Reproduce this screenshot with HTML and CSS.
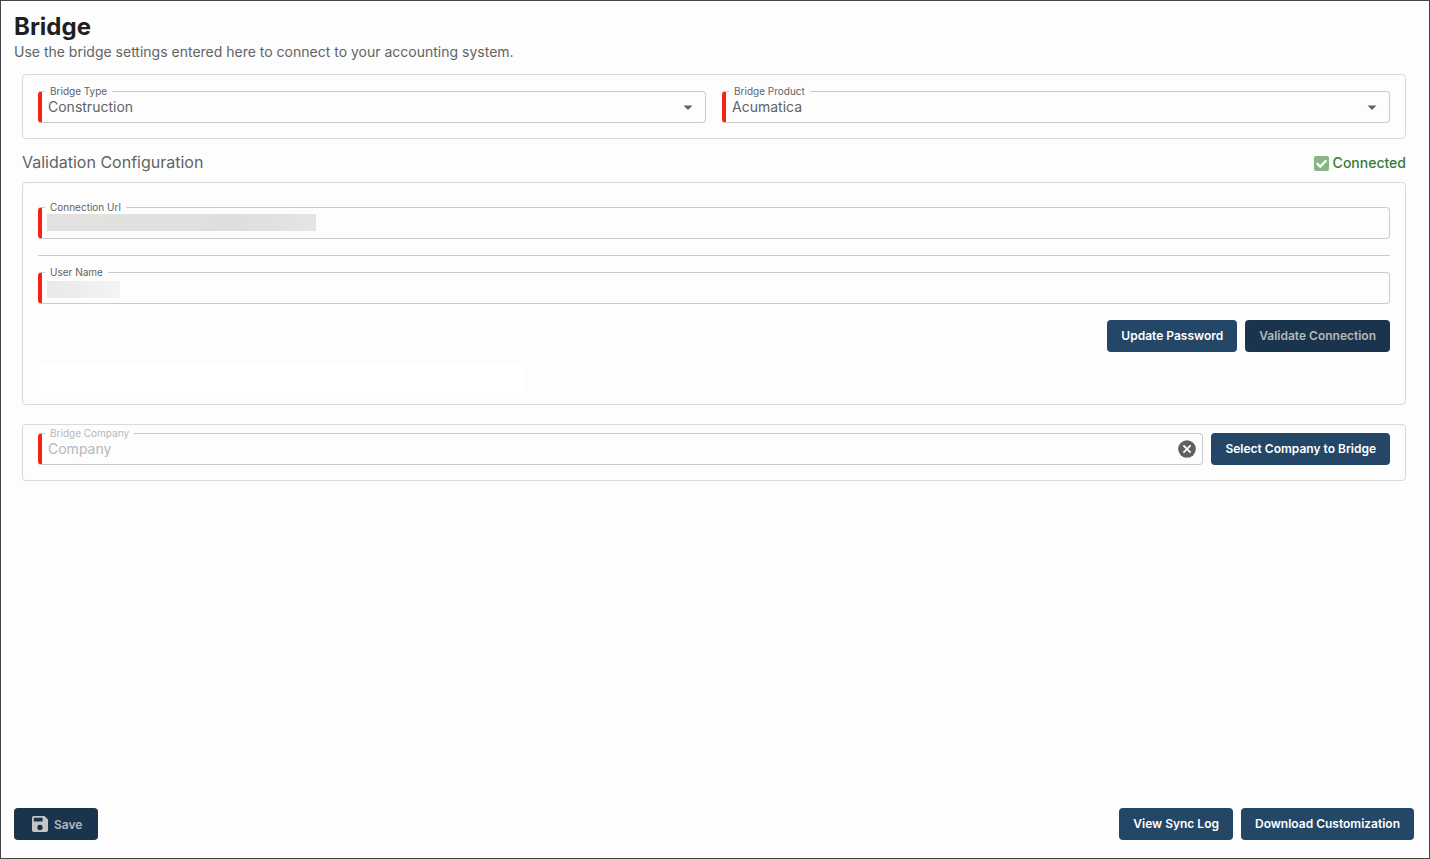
FILE: index.html
```html
<!doctype html>
<html lang="en">
<head>
<meta charset="utf-8">
<title>Bridge</title>
<link rel="stylesheet" href="styles.css">
</head>
<body>
	<header>
		<h1>Bridge</h1>
		<p class="intro">Use the bridge settings entered here to connect to your accounting system.</p>
	</header>

	<main>
		<section class="panel types">
			<fieldset class="field">
				<legend><label for="bridgeType">Bridge Type</label></legend>
				<div class="control">
					<select id="bridgeType">
						<option>Construction</option>
					</select>
					<svg class="arrow" width="10" height="5" viewBox="0 0 10 5"><path d="M0.5 0.5h9L5 5z"/></svg>
				</div>
			</fieldset>
			<fieldset class="field">
				<legend><label for="bridgeProduct">Bridge Product</label></legend>
				<div class="control">
					<select id="bridgeProduct">
						<option>Acumatica</option>
					</select>
					<svg class="arrow" width="10" height="5" viewBox="0 0 10 5"><path d="M0.5 0.5h9L5 5z"/></svg>
				</div>
			</fieldset>
		</section>

		<div class="sectionHead">
			<h2>Validation Configuration</h2>
			<span class="status">
				<svg width="15" height="15" viewBox="0 0 15 15"><rect width="15" height="15" rx="2" fill="#88b582"/><path d="M3.4 7.8l2.9 2.8 5.4-5.6" fill="none" stroke="#fff" stroke-width="2.4" stroke-linecap="round"/></svg>
				Connected
			</span>
		</div>

		<section class="panel connection">
			<fieldset class="field">
				<legend><label for="connectionUrl">Connection Url</label></legend>
				<div class="control">
					<input type="text" id="connectionUrl" class="maskedUrl">
				</div>
			</fieldset>
			<hr>
			<fieldset class="field">
				<legend><label for="userName">User Name</label></legend>
				<div class="control">
					<input type="text" id="userName" class="maskedUser">
				</div>
			</fieldset>
			<div class="buttons">
				<button type="button">Update Password</button>
				<button type="button" disabled>Validate Connection</button>
			</div>
			<div class="message"></div>
		</section>

		<section class="panel company">
			<fieldset class="field dim">
				<legend><label for="company">Bridge Company</label></legend>
				<div class="control">
					<input type="text" id="company" placeholder="Company">
					<button type="button" class="clear" aria-label="Clear">
						<svg width="18" height="18" viewBox="0 0 18 18"><circle cx="9" cy="9" r="8.8" fill="#5f6061"/><path d="M5.4 5.4l7.2 7.2M12.6 5.4l-7.2 7.2" stroke="#fff" stroke-width="1.8"/></svg>
					</button>
				</div>
			</fieldset>
			<button type="button">Select Company to Bridge</button>
		</section>
	</main>

	<footer>
		<button type="button" class="save" disabled>
			<svg width="16" height="16" viewBox="0 0 16 16"><path fill-rule="evenodd" d="M1.8 0H12.4L16 3.6V14.2A1.8 1.8 0 0 1 14.2 16H1.8A1.8 1.8 0 0 1 0 14.2V1.8A1.8 1.8 0 0 1 1.8 0zM1.8 1.8V5.4H10.6V1.8zM8 8.8a2.7 2.7 0 1 0 0 5.4a2.7 2.7 0 1 0 0-5.4z"/></svg>
			Save
		</button>
		<div class="buttons">
			<button type="button">View Sync Log</button>
			<button type="button">Download Customization</button>
		</div>
	</footer>
</body>
</html>
```
FILE: styles.css
```css
* {
  box-sizing: border-box;
}
body {
  margin: 0;
  min-height: 100vh;
  display: flex;
  flex-direction: column;
  padding: 12px 15px 18px 13px;
  border: 1px solid #444446;
  background-color: #fdfdfd;
  color: #616365;
  font-family: Inter, "Liberation Sans", sans-serif;
  font-size: 14px;
}
h1 {
  margin: 0;
  font-size: 24px;
  line-height: 28px;
  font-weight: 700;
  color: #1d1f21;
}
.intro {
  margin: 0;
  line-height: 22px;
}
main {
  flex: 1;
  padding: 11px 8px 0;
}

/* panels */
.panel {
  border: 1px solid #d8d9da;
  border-radius: 4px;
  padding: 11px 15px 15px;
}
.types {
  display: grid;
  grid-template-columns: 1fr 1fr;
  gap: 16px;
}
.sectionHead {
  display: flex;
  justify-content: space-between;
  align-items: flex-start;
  padding: 13px 0 8px;
}
h2 {
  margin: 0;
  font-size: 16px;
  line-height: 20px;
  font-weight: 400;
}
.status {
  display: flex;
  align-items: center;
  gap: 4px;
  color: #367a3a;
  line-height: 22px;
  font-weight: 500;
}
.connection {
  padding: 19px 15px 11px;
}
hr {
  margin: 16px 0 11px;
  border: 0;
  border-top: 1px solid #c9cbcc;
}
.connection .buttons {
  margin-top: 16px;
}
.message {
  height: 30px;
  width: 36%;
  margin-top: 11px;
  background-color: #fff;
}
.company {
  display: flex;
  align-items: flex-end;
  gap: 8px;
  margin-top: 19px;
  padding-top: 3px;
}
.company .field {
  flex: 1;
}

/* outlined fields, the label sits in the top border */
.field {
  min-width: 0;
  margin: 0;
  padding: 0 6px 5px 5px;
  border: 1px solid #c9cbcc;
  border-left: 4px solid #f42314;
  border-radius: 4px;
}
legend {
  margin-left: -2px;
  padding: 0 5px;
  font-size: 10px;
  line-height: 11px;
}
.control {
  position: relative;
  display: flex;
  align-items: center;
  height: 20px;
}
select,
input {
  flex: 1;
  min-width: 0;
  height: 20px;
  margin: 0;
  padding: 0 0 0 1px;
  border: 0;
  outline: 0;
  background-color: transparent;
  color: inherit;
  font: inherit;
  line-height: 20px;
  appearance: none;
}
.arrow {
  position: absolute;
  right: 6px;
  top: 8px;
  fill: #616365;
  pointer-events: none;
}
.maskedUrl {
  background: linear-gradient(90deg, #e3e1df, #dfe1e0 40%, #dedede 70%, #e4e5e7) 0 1px / 269px 17px no-repeat;
}
.maskedUser {
  background: linear-gradient(90deg, #e8e9eb, #eeeeee 50%, #f3f4f4) 0 3px / 73px 17px no-repeat;
}
.dim,
.dim input::placeholder {
  color: #b6b8b9;
  opacity: 1;
}

/* buttons */
button {
  height: 32px;
  padding: 0 14px 1px;
  border: 0;
  border-radius: 4px;
  background-color: #244767;
  color: #fff;
  font-family: inherit;
  font-size: 12px;
  font-weight: 600;
  white-space: nowrap;
}
button:disabled {
  background-color: #1a344d;
  color: #b5b9bc;
}
.buttons {
  display: flex;
  justify-content: flex-end;
  gap: 8px;
}
.clear {
  height: 18px;
  padding: 0;
  border-radius: 9px;
  background: none;
}
.clear svg {
  display: block;
}
.save {
  display: flex;
  align-items: center;
  gap: 6px;
  padding: 0 16px 0 18px;
}
.save svg {
  fill: #c4c5c6;
}
footer {
  display: flex;
  justify-content: space-between;
}
```
